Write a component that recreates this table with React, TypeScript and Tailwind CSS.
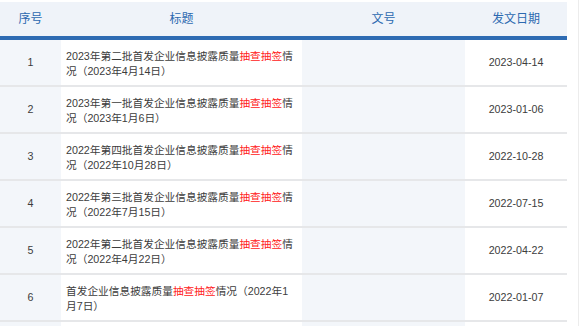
import React from "react";

const font = { fontFamily: '"Liberation Sans", Arial, "Noto Sans CJK SC", sans-serif' };

type Row = { n: string; l1: [string, string]; l2: string; date: string };

const rows: Row[] = [
  { n: "1", l1: ["2023年第二批首发企业信息披露质量", "情"], l2: "况（2023年4月14日）", date: "2023-04-14" },
  { n: "2", l1: ["2023年第一批首发企业信息披露质量", "情"], l2: "况（2023年1月6日）", date: "2023-01-06" },
  { n: "3", l1: ["2022年第四批首发企业信息披露质量", "情"], l2: "况（2022年10月28日）", date: "2022-10-28" },
  { n: "4", l1: ["2022年第三批首发企业信息披露质量", "情"], l2: "况（2022年7月15日）", date: "2022-07-15" },
  { n: "5", l1: ["2022年第二批首发企业信息披露质量", "情"], l2: "况（2022年4月22日）", date: "2022-04-22" },
  { n: "6", l1: ["首发企业信息披露质量", "情况（2022年1"], l2: "月7日）", date: "2022-01-07" },
];

export default function App() {
  return (
    <div className="relative w-[580px] h-[326px] overflow-hidden bg-white pt-[2px]" style={font}>
      <div className="absolute right-[1px] top-0 bottom-0 w-px bg-[#ececec]" />
      <div className="w-[567px]">
        <div className="flex h-[34px] bg-[#eff3f9] text-[12px] text-[#2c69b0] items-center">
          <div className="w-[61px] text-center">序号</div>
          <div className="w-[241px] text-center">标题</div>
          <div className="w-[163px] text-center">文号</div>
          <div className="w-[102px] text-center">发文日期</div>
        </div>
        <div className="h-[4px] bg-[#2e6bb3]" />
        {rows.map((r) => (
          <div key={r.n} className="flex h-[47px] border-b-2 border-[#e6e7e9] text-[10.7px] text-[#3c3c3c]">
            <div className="w-[61px] bg-[#f3f6fa] flex items-center justify-center">{r.n}</div>
            <div className="w-[241px] pl-[5px] pt-[3px] flex items-center leading-[15px] whitespace-nowrap">
              <div>
                {r.l1[0]}
                <span className="text-[#ff2020]">抽查抽签</span>
                {r.l1[1]}
                <br />
                {r.l2}
              </div>
            </div>
            <div className="w-[163px] bg-[#f3f6fa]" />
            <div className="w-[102px] flex items-center justify-center">{r.date}</div>
          </div>
        ))}
        <div className="flex h-[20px]">
          <div className="w-[61px] bg-[#f3f6fa]" />
          <div className="w-[241px]" />
          <div className="w-[163px] bg-[#f3f6fa]" />
        </div>
      </div>
    </div>
  );
}
